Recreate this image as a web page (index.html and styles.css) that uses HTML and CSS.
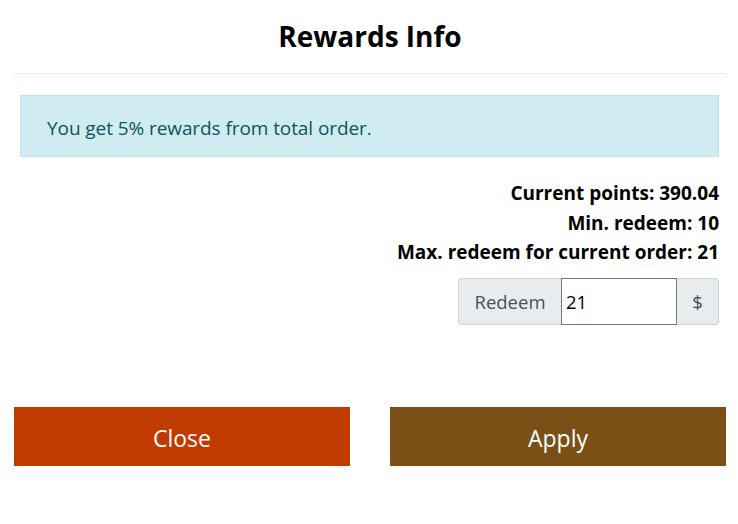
FILE: index.html
```html
<!DOCTYPE html>
<html>
<head>
<meta charset="utf-8">
<link rel="stylesheet" href="styles.css">
</head>
<body>
<div class="modal">
  <div class="modal-header">
    <h4 class="modal-title">Rewards Info</h4>
  </div>
  <div class="modal-body">
    <div class="alert">You get 5% rewards from total order.</div>
    <div class="points">
      <div class="line">Current points: 390.04</div>
      <div class="line">Min. redeem: 10</div>
      <div class="line">Max. redeem for current order: 21</div>
    </div>
    <div class="redeem-row">
      <div class="input-group">
        <span class="addon addon-left">Redeem</span>
        <input class="field" type="text" value="21">
        <span class="addon addon-right">$</span>
      </div>
    </div>
  </div>
  <div class="modal-footer">
    <button class="btn btn-close">Close</button>
    <button class="btn btn-apply">Apply</button>
  </div>
</div>
</body>
</html>
```
FILE: styles.css
```css
* { box-sizing: border-box; }
html, body { margin: 0; padding: 0; background: #fff; }
body {
  font-family: "Open Sans", "Noto Sans", sans-serif;
  color: #000;
  width: 738px;
  height: 524px;
  overflow: hidden;
}
.modal { padding: 0 12px 0 14px; }
.modal-header {
  height: 74px;
  border-bottom: 1px solid #ececec;
  display: flex;
  align-items: center;
  justify-content: center;
}
.modal-title {
  margin: 0;
  font-size: 28px;
  font-weight: 700;
  padding-bottom: 1px;
}
.modal-body { padding: 21px 7px 0 6px; }
.alert {
  background: #d1ecf1;
  border: 1px solid #bee5eb;
  color: #0c5460;
  height: 62px;
  padding: 3px 26px 0;
  display: flex;
  align-items: center;
  font-size: 19px;
  letter-spacing: -0.08px;
}
.points {
  margin-top: 22px;
  text-align: right;
  font-weight: 700;
  font-size: 19px;
}
.line { line-height: 29.5px; }
.redeem-row {
  margin-top: 10px;
  display: flex;
  justify-content: flex-end;
}
.input-group {
  display: flex;
  height: 47px;
}
.addon {
  background: #e9ecef;
  border: 1px solid #ced4da;
  color: #495057;
  font-size: 18.5px;
  display: flex;
  align-items: center;
  justify-content: center;
}
.addon-left {
  width: 103px;
  border-radius: 4px 0 0 4px;
  border-right: none;
}
.addon-right {
  width: 42px;
  border-radius: 0 4px 4px 0;
  border-left: none;
}
.field {
  width: 116px;
  height: 47px;
  margin: 0;
  border: 1px solid #767676;
  border-radius: 0;
  padding: 0 4px;
  font-family: "Open Sans", "Noto Sans", sans-serif;
  font-size: 18.5px;
  color: #000;
  outline: none;
}
.modal-footer {
  margin-top: 82px;
  display: flex;
  gap: 40px;
}
.btn {
  flex: 1;
  height: 59px;
  border: none;
  color: #fff;
  font-family: "Open Sans", "Noto Sans", sans-serif;
  font-size: 23px;
  padding: 4px 0 0;
  margin: 0;
}
.btn-close { background: #c13b00; }
.btn-apply { background: #7b5017; }
```
